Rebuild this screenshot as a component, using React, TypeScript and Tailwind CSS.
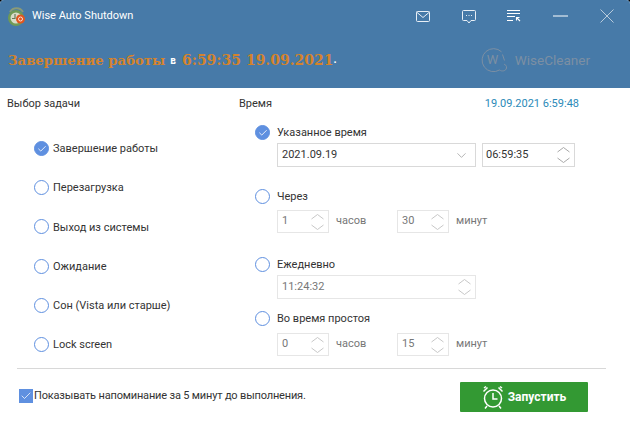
import { ChevronDown, Check } from "lucide-react";

const tasks = [
  { label: "Завершение работы", checked: true },
  { label: "Перезагрузка", checked: false },
  { label: "Выход из системы", checked: false },
  { label: "Ожидание", checked: false },
  { label: "Сон (Vista или старше)", checked: false },
  { label: "Lock screen", checked: false },
];

const Radio = ({ checked = false }: { checked?: boolean }) => (
  <div className="w-[15px] h-[15px] shrink-0 rounded-full border border-[#5f90e0] bg-white flex items-center justify-center data-[on=true]:bg-[#5f90e0]" data-on={checked}>
    {checked && <Check className="w-[10px] h-[10px] text-white" strokeWidth={2} />}
  </div>
);

const Spin = ({ dark = false }: { dark?: boolean }) => (
  <svg width="15" height="18" viewBox="0 0 15 18" fill="none" stroke={dark ? "#a8a8a8" : "#c8c8c8"} strokeWidth="1">
    <path d="M1.5 6 7.5 1.5l6 4.5M1.5 12l6 4.5 6-4.5" />
  </svg>
);

const SpinField = ({ value }: { value: string }) => (
  <div className="w-[52px] h-[23px] border border-[#e6e6e6] flex items-center justify-between pl-[4px] pr-[3px] text-[#777]">
    <span>{value}</span>
    <Spin />
  </div>
);

const Duration = ({ hours, minutes }: { hours: string; minutes: string }) => (
  <div className="flex items-center ml-[15px] text-[#777]">
    <SpinField value={hours} />
    <span className="ml-[7px] w-[61px]">часов</span>
    <SpinField value={minutes} />
    <span className="ml-[7px]">минут</span>
  </div>
);

const Logo = () => (
  <svg width="19" height="21" viewBox="0 0 19 21">
    <path d="M3 6 A7.5 7.5 0 0 1 16 6" fill="none" stroke="#8a9a78" strokeWidth="2" />
    <circle cx="9" cy="12" r="8" fill="#6f9a55" />
    <circle cx="9" cy="12" r="5.5" fill="#d8dcc8" />
    <path d="M8 8v4.5h-3" fill="none" stroke="#6b7a5a" strokeWidth="1.2" />
    <circle cx="13.5" cy="13" r="4.5" fill="#e0561f" />
    <circle cx="13.5" cy="13" r="2" fill="none" stroke="#fff" strokeWidth="0.8" />
  </svg>
);

const MailIcon = () => (
  <svg width="14" height="13" viewBox="0 0 14 13" fill="none" stroke="#e8eff6" strokeWidth="1">
    <rect x="0.5" y="1.5" width="13" height="10" rx="1" />
    <path d="M0.5 2 7 7.5 13.5 2" />
  </svg>
);

const ChatIcon = () => (
  <svg width="14" height="14" viewBox="0 0 14 14" fill="none" stroke="#e8eff6" strokeWidth="1">
    <path d="M1.5.5h11a1 1 0 0 1 1 1v8a1 1 0 0 1-1 1H9L7 13 5 10.5H1.5a1 1 0 0 1-1-1v-8a1 1 0 0 1 1-1z" />
    <path d="M4 5.5h1M6.5 5.5h1M9 5.5h1" />
  </svg>
);

const QueueIcon = () => (
  <svg width="14" height="12" viewBox="0 0 14 12" fill="none" stroke="#fff" strokeWidth="1">
    <path d="M0 .5h13M0 3.5h13M0 6.5h8M0 10.5h6" />
    <path d="M9.5 7v3.5M9.5 7.5h3M10 8l3 3" strokeWidth="1.1" />
  </svg>
);

const MinimizeIcon = () => (
  <svg width="15" height="2" viewBox="0 0 15 2" stroke="#fff" strokeWidth="1">
    <path d="M0 1h15" />
  </svg>
);

const CloseIcon = () => (
  <svg width="14" height="14" viewBox="0 0 14 14" stroke="#b8cbdc" strokeWidth="1">
    <path d="M.5.5l13 13M13.5.5l-13 13" />
  </svg>
);

const CloudLogo = () => (
  <div className="relative w-[27px] h-[25px]">
    <svg width="27" height="25" viewBox="0 0 27 25" fill="none" stroke="#7c8fa3" strokeWidth="1">
      <path d="M20.5 3.8A11.5 11.5 0 1 0 18.5 22c2.5 1.8 6.5 1 7-2 .4-2.5-1.5-3.5-2.5-3.8" />
      <path d="M21.5 6.5l2 6" />
    </svg>
    <span className="absolute left-[6px] top-[4px] text-[13px] leading-[16px] text-[#7c8fa3]">W</span>
  </div>
);

const AlarmIcon = () => (
  <svg width="22" height="25" viewBox="0 0 22 25" fill="none" stroke="#fff" strokeWidth="1.5">
    <circle cx="11" cy="13.5" r="8.5" />
    <path d="M11 8v6h4.5" />
    <path d="M1.5 6.5 5.5 2.5M2 3l2-1.5M20.5 6.5l-4-4M20 3l-2-1.5M5 21l-2 2.5M17 21l2 2.5" />
  </svg>
);

export default function App() {
  return (
    <div className="w-[630px] h-[423px] bg-black overflow-hidden font-['Roboto','Noto_Sans',sans-serif] text-[11px] text-[#333]">
      <div className="w-full h-full bg-white rounded-t-[4px] overflow-hidden">
        {/* Header */}
        <header className="h-[88px] bg-[#477aa8] flex flex-col">
          <div className="h-[32px] flex items-center pl-[7px] text-white">
            <Logo />
            <span className="ml-[6px]">Wise Auto Shutdown</span>
            <div className="ml-auto flex items-center">
              <div className="mr-[32px]"><MailIcon /></div>
              <div className="mr-[31px] mt-[1px]"><ChatIcon /></div>
              <div className="mr-[32px]"><QueueIcon /></div>
              <div className="mr-[32px]"><MinimizeIcon /></div>
              <div className="mr-[16px]"><CloseIcon /></div>
            </div>
          </div>
          <div className="flex items-center h-[56px] pt-[1px] pl-[8px]">
            <span className="font-['DejaVu_Serif',serif] font-bold text-[13.25px] text-[#d4832c]">Завершение работы</span>
            <span className="ml-[5px] font-bold text-[10px] text-white">в</span>
            <span className="ml-[6px] font-['DejaVu_Serif',serif] font-bold text-[14px] text-[#d4832c]">6:59:35 19.09.2021</span>
            <span className="font-bold text-white">.</span>
            <div className="ml-auto mr-[40px] flex items-center">
              <CloudLogo />
              <span className="ml-[7px] text-[13.5px] text-[#7c8fa3]">WiseCleaner</span>
            </div>
          </div>
        </header>

        {/* Body */}
        <div className="flex h-[280px]">
          <div className="w-[239px] shrink-0 pl-[7px]">
            <div className="mt-[8px] leading-[16px]">Выбор задачи</div>
            <div className="mt-[29px] ml-[27px] flex flex-col gap-[24.2px]">
              {tasks.map((t) => (
                <div key={t.label} className="flex items-center gap-[4px] h-[15px] whitespace-nowrap">
                  <Radio checked={t.checked} />
                  <span className="pt-[2px]">{t.label}</span>
                </div>
              ))}
            </div>
          </div>

          <div className="flex-1">
            <div className="mt-[8px] flex justify-between leading-[16px] pr-[51px]">
              <span>Время</span>
              <span className="text-[#2b8ab8]">19.09.2021 6:59:48</span>
            </div>

            <div className="mt-[13px] ml-[16px] flex items-center gap-[7px] h-[15px]">
              <Radio checked />
              <span className="pt-[1px]">Указанное время</span>
            </div>
            <div className="mt-[3px] ml-[38px] flex gap-[6px]">
              <div className="w-[199px] h-[24px] border border-[#d9d9d9] flex items-center justify-between pl-[4px] pr-[6px]">
                <span>2021.09.19</span>
                <ChevronDown className="w-[15px] h-[15px] text-[#888]" strokeWidth={1} />
              </div>
              <div className="w-[93px] h-[24px] border border-[#d9d9d9] flex items-center justify-between pl-[3px] pr-[3px]">
                <span>06:59:35</span>
                <Spin dark />
              </div>
            </div>

            <div className="mt-[22px] ml-[16px] flex items-center gap-[7px] h-[15px]">
              <Radio />
              <span className="pt-[1px]">Через</span>
            </div>
            <div className="mt-[6px] ml-[23px]">
              <Duration hours="1" minutes="30" />
            </div>

            <div className="mt-[24px] ml-[16px] flex items-center gap-[7px] h-[15px]">
              <Radio />
              <span className="pt-[2px]">Ежедневно</span>
            </div>
            <div className="mt-[3px] ml-[38px] w-[199px] h-[24px] border border-[#e6e6e6] flex items-center justify-between pl-[4px] pr-[3px] text-[#777]">
              <span>11:24:32</span>
              <Spin />
            </div>

            <div className="mt-[12px] ml-[16px] flex items-center gap-[7px] h-[15px]">
              <Radio />
              <span className="pt-[2px]">Во время простоя</span>
            </div>
            <div className="mt-[7px] ml-[23px]">
              <Duration hours="0" minutes="15" />
            </div>
          </div>
        </div>

        {/* Footer */}
        <div className="mx-[17px] w-[589px] border-t border-[#d8d8d8] flex items-center h-[55px] pl-[2px]">
          <div className="w-[14px] h-[14px] bg-[#5f90e0] flex items-center justify-center">
            <Check className="w-[12px] h-[12px] text-white" strokeWidth={1.5} />
          </div>
          <span className="ml-[1px] tracking-[-0.17px]">Показывать напоминание за 5 минут до выполнения.</span>
          <button className="ml-auto mr-[18px] w-[128px] h-[30px] mt-[2px] bg-[#339933] rounded-[1px] flex items-center justify-center gap-[4px] text-white text-[12px] font-bold">
            <AlarmIcon />
            <span>Запустить</span>
          </button>
        </div>
      </div>
    </div>
  );
}
